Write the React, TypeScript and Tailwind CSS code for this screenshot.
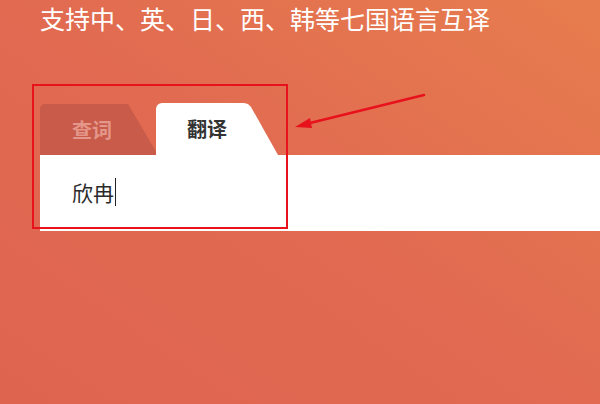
export default function App() {
  return (
    <div className="relative h-[404px] w-[600px] overflow-hidden bg-gradient-to-tr from-[#df6450] via-[#e16a51] to-[#e77d4e] font-['Noto_Sans_CJK_SC','Noto_Sans',sans-serif]">
      <div className="h-[103px] pl-[40px] pt-[3px]">
        <h1 className="text-[25px] leading-[30px] font-normal text-white">支持中、英、日、西、韩等七国语言互译</h1>
      </div>

      <div className="flex h-[52px] items-end pl-[40px]">
        <div className="flex h-[51px] w-[118px] items-center rounded-tl-[5px] bg-[#c85b49] pl-[32px] [clip-path:polygon(0_0,88px_0,100%_100%,0_100%)]">
          <span className="text-[20px] leading-none font-bold text-[#e4968a]">查词</span>
        </div>
        <div className="-ml-[2px] flex h-[52px] w-[122px] items-center rounded-tl-[6px] bg-white pl-[31px] [clip-path:polygon(0_0,88px_0,92px_1px,95px_4px,100%_100%,0_100%)]">
          <span className="text-[20px] leading-none font-bold text-[#333333]">翻译</span>
        </div>
      </div>

      <div className="ml-[40px] flex h-[76px] items-center bg-white pl-[32px] pb-[2px]">
        <span className="text-[21px] leading-none text-[#2a2a2a]">欣冉</span>
        <span className="ml-[1px] h-[28px] w-px bg-[#222]" />
      </div>

      {/* annotation overlay */}
      <div className="absolute left-[32px] top-[84px] h-[145px] w-[256px] border-2 border-[#e8121c]" />
      <svg className="absolute left-0 top-0" width="600" height="404" viewBox="0 0 600 404">
        <line x1="424" y1="95" x2="306" y2="124" stroke="#e8121c" strokeWidth="2.6" strokeLinecap="round" />
        <polygon points="295,127 310,118 312,128" fill="#e8121c" />
      </svg>
    </div>
  );
}
